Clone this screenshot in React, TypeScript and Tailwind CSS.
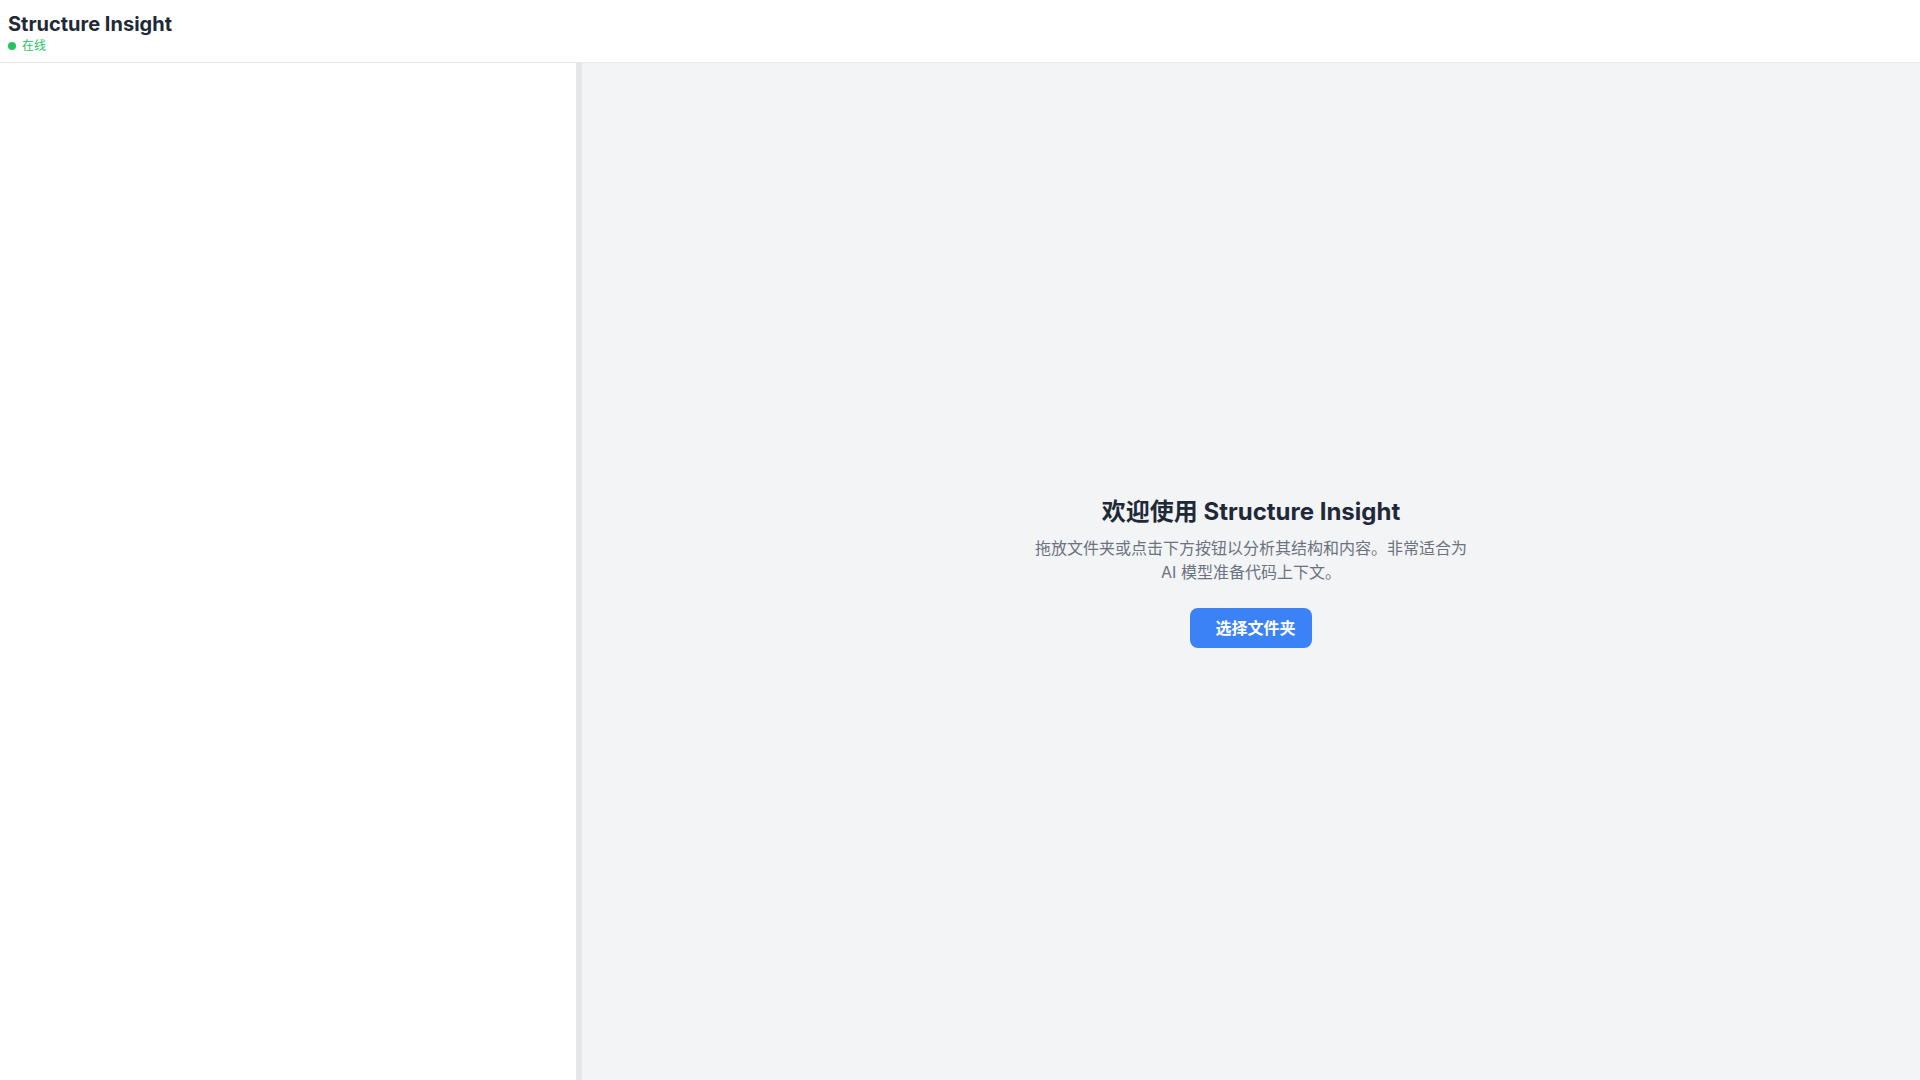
import React from 'react';

const fontStack = { fontFamily: 'Inter, "Noto Sans CJK SC", sans-serif' };

const Header: React.FC = () => (
    <header className="flex flex-col px-2 pt-[10px] pb-2 border-b border-[#e5e7eb] bg-white">
        <h1 className="text-xl font-bold text-[#1f2937] leading-7">Structure Insight</h1>
        <div className="flex items-center gap-1.5 text-xs text-[#22c55e] leading-4">
            <span className="w-2 h-2 rounded-full bg-[#22c55e]" />
            <span>在线</span>
        </div>
    </header>
);

export default function App() {
    return (
        <div className="h-screen flex flex-col bg-white" style={fontStack}>
            <Header />
            <div className="flex flex-1 min-h-0">
                {/* sidebar, empty until a folder is loaded */}
                <aside className="w-[576px] bg-white" />
                <div className="w-[6px] bg-[#e5e7eb]" />
                <main className="flex-1 bg-[#f3f4f6] flex items-center justify-center">
                    <div className="flex flex-col items-center text-center">
                        <h2 className="text-2xl font-bold text-[#1f2937] mb-2">欢迎使用 Structure Insight</h2>
                        <p className="max-w-md text-base leading-6 text-[#6b7280]">
                            拖放文件夹或点击下方按钮以分析其结构和内容。非常适合为 AI 模型准备代码上下文。
                        </p>
                        <button className="mt-6 h-10 pl-[25px] pr-4 rounded-lg bg-[#3b82f6] text-white font-bold text-base">
                            选择文件夹
                        </button>
                    </div>
                </main>
            </div>
        </div>
    );
}
